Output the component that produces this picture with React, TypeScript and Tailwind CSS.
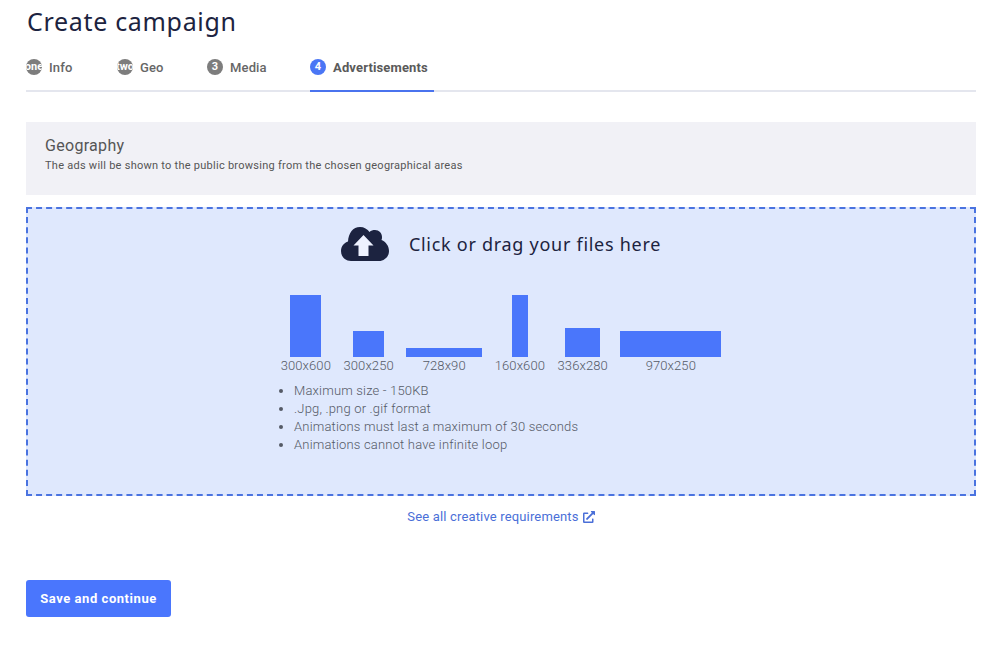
import { FaExternalLinkAlt } from "react-icons/fa";

const tabs = [
  { n: "one", label: "Info", w: "w-[91px]" },
  { n: "two", label: "Geo", w: "w-[90px]" },
  { n: "3", label: "Media", w: "w-[103px]" },
];

const sizes = [
  { label: "300x600", w: "w-[31px]", h: "h-[62px]" },
  { label: "300x250", w: "w-[31px]", h: "h-[26px]" },
  { label: "728x90", w: "w-[76px]", h: "h-[9px]" },
  { label: "160x600", w: "w-[16px]", h: "h-[62px]" },
  { label: "336x280", w: "w-[35px]", h: "h-[29px]" },
  { label: "970x250", w: "w-[101px]", h: "h-[26px]" },
];

const rules = [
  "Maximum size - 150KB",
  ".Jpg, .png or .gif format",
  "Animations must last a maximum of 30 seconds",
  "Animations cannot have infinite loop",
];

export default function App() {
  return (
    <div className="h-[659px] w-[1007px] overflow-hidden bg-white pl-[26px] pr-[31px] font-['Roboto',sans-serif]">
      <h1 className="h-[46px] pl-[1px] pt-[4px] font-['Noto_Sans',sans-serif] text-[25px] leading-[34px] tracking-[0.68px] text-[#1c2340]">
        Create campaign
      </h1>
      <div className="flex h-[46px] border-b-2 border-[#e4e6ee]">
        {tabs.map((t) => (
          <div key={t.n} className={`${t.w} flex h-[46px] items-start pt-[13px]`}>
            <span className="flex h-4 w-4 shrink-0 items-center justify-center overflow-hidden rounded-full bg-[#7d7d7d] text-[11px] font-bold leading-4 text-white">
              {t.n}
            </span>
            <span className="ml-[7px] text-[13px] font-medium leading-[18px] tracking-[0.15px] text-[#666666]">{t.label}</span>
          </div>
        ))}
        <div className="flex h-[46px] w-[124px] items-start border-b-2 border-[#4a73ee] pt-[13px]">
          <span className="flex h-4 w-4 shrink-0 items-center justify-center rounded-full bg-[#4a76f5] text-[11px] font-bold leading-4 text-white">
            4
          </span>
          <span className="ml-[7px] text-[13px] font-bold leading-[18px] tracking-[0.15px] text-[#5a5a5a]">Advertisements</span>
        </div>
      </div>

      <section className="mt-[30px] h-[73px] bg-[#f1f1f6] pl-[19px] pt-[14px]">
        <h2 className="text-[16px] leading-[20px] tracking-[0.3px] text-[#555555]">Geography</h2>
        <p className="mt-[1px] text-[11px] leading-[17px] tracking-[0.26px] text-[#555555]">
          The ads will be shown to the public browsing from the chosen geographical areas
        </p>
      </section>

      <section className="mt-[12px] h-[289px] border-2 border-dashed border-[#4a73e0] bg-[#dfe8fd]">
        <div className="flex h-[70px] items-center justify-center">
          <svg viewBox="0 0 48 34" className="h-[34px] w-[48px]" aria-hidden="true">
            <path
              fill="#1c2340"
              d="M10 34C4 34 0 29.5 0 24C0 19 3.5 15.5 7 14.5C7.5 6 12 0 19 0C23 0 26.5 2 28.5 5C30 3.5 32 3 34 3C38 3 41 6 41 10C41 11 41 12 40.5 13C45 15 48 19 48 24C48 30 43 34 38 34Z"
            />
            <path fill="#eef2ff" d="M22.5 8 32.5 18.5H27.5V29H17.5V18.5H12.5Z" />
          </svg>
          <span className="ml-[20px] font-['Noto_Sans',sans-serif] text-[18px] leading-[24px] tracking-[0.72px] text-[#1c2340]">
            Click or drag your files here
          </span>
        </div>

        <div className="mt-[16px] flex justify-center gap-[12.5px]">
          {sizes.map((s) => (
            <div key={s.label} className="flex h-[80px] flex-col items-center">
              <div className="flex h-[62px] items-end">
                <div className={`${s.w} ${s.h} bg-[#4a76fb]`} />
              </div>
              <span className="text-[13px] font-light leading-[17px] tracking-[0.1px] text-[#555a66]">{s.label}</span>
            </div>
          ))}
        </div>

        <ul className="ml-[266px] mt-[7px] list-disc pl-0 text-[13px] font-light leading-[18px] tracking-[0.18px] text-[#555a66] marker:text-[#555a66]">
          {rules.map((r) => (
            <li key={r}>{r}</li>
          ))}
        </ul>
      </section>

      <a className="mt-[12px] flex h-[18px] items-center justify-center text-[13px] leading-[18px] tracking-[0.16px] text-[#4a6fd8]">
        See all creative requirements
        <FaExternalLinkAlt className="ml-[4px] h-[12px] w-[12px]" />
      </a>

      <button className="mt-[54px] block h-[37px] w-[145px] rounded-[3px] bg-[#4a76fd] text-[13px] font-bold tracking-[0.55px] text-white">
        Save and continue
      </button>
    </div>
  );
}
